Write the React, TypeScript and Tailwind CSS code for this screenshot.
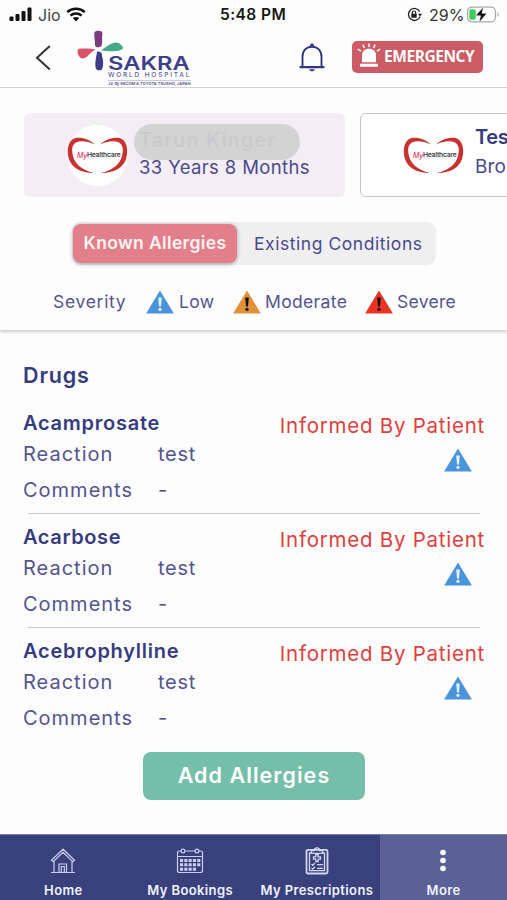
import type { ReactNode } from 'react';

interface Drug {
    id: number;
    name: string;
    reaction: string;
    comments: string;
    nameClass: string;
}

const DRUGS: Drug[] = [
    { id: 1, name: 'Acamprosate', reaction: 'test', comments: '-', nameClass: 'tracking-[0.75px]' },
    { id: 2, name: 'Acarbose', reaction: 'test', comments: '-', nameClass: 'tracking-[0.6px]' },
    { id: 3, name: 'Acebrophylline', reaction: 'test', comments: '-', nameClass: 'tracking-[0.75px]' },
];

const SEVERITY_COLORS = {
    low: { fill: '#4a94dc', mark: '#e4f1fc' },
    moderate: { fill: '#e0913a', mark: '#111111' },
    severe: { fill: '#e93323', mark: '#111111' },
};

function SeverityIcon({ level }: { level: keyof typeof SEVERITY_COLORS }) {
    const { fill, mark } = SEVERITY_COLORS[level];
    return (
        <svg width="28" height="24" viewBox="0 0 28 24" className="shrink-0">
            <path d="M14 .5 27.9 23.5H.1Z" fill={fill} />
            <path d="M12.2 7.500h3.600l-.8 9h-2Z" fill={mark} />
            <circle cx="14" cy="19.300" r="1.600" fill={mark} />
        </svg>
    );
}

function HeartLogo() {
    return (
        <div className="relative h-[61px] w-[61px] shrink-0 rounded-full bg-white">
            <svg width="61" height="61" viewBox="0 0 61 61" className="absolute inset-0">
                <path d="M28 19.500C22 14 12 11 6 14C0 18 0 28 2 34C5 43.500 16 48.500 27 48C16 45.500 9.500 40 7 34C4.500 27 4 20 9 17.500C14 15.500 20 16 28 19.500Z" fill="#c8322e" />
                <path d="M33 19.500C39 14 49 11 55 14C61 18 61 28 59 34C56 43.500 45 48.500 34 48C45 45.500 51.500 40 54 34C56.500 27 57 20 52 17.500C47 15.500 41 16 33 19.500Z" fill="#c8322e" />
            </svg>
            <div className="absolute top-[23px] left-[10px] flex h-[16px] items-center text-[6.800px] leading-none font-semibold tracking-[-0.250px] text-[#444]">
                <span className="text-[7px] font-medium text-[#e0405a] italic">My</span>Healthcare
            </div>
        </div>
    );
}

function StatusBar() {
    return (
        <div className="flex h-[29px] shrink-0 items-center text-[#171717]">
            <svg width="23" height="15" viewBox="0 0 23 15" className="ml-[9px]">
                <rect x="0.500" y="9.500" width="4" height="4.500" rx="1" fill="#111" />
                <rect x="6.500" y="7" width="4" height="7" rx="1" fill="#111" />
                <rect x="12.500" y="4" width="4" height="10" rx="1" fill="#111" />
                <rect x="18.500" y="0.500" width="4" height="13.500" rx="1" fill="#111" />
            </svg>
            <span className="ml-[6px] w-[28px] text-[16px] text-[#444]">Jio</span>
            <svg width="20" height="15" viewBox="0 0 20 15">
                <path d="M1.300 5.200C6.200.7 13.800.7 18.700 5.200M4.400 8.600C7.600 5.800 12.400 5.800 15.600 8.600" fill="none" stroke="#111" strokeWidth="2.500" />
                <path d="M6.800 11.100C8.700 9.600 11.300 9.600 13.200 11.100L10 14.500Z" fill="#111" />
            </svg>
            <span className="ml-[134px] w-[80px] pt-px text-[15.500px] font-semibold tracking-[0.450px] whitespace-nowrap">5:48 PM</span>
            <svg width="15" height="15" viewBox="0 0 15 15" className="ml-[107px]">
                <path d="M12.700 4.500A6 6 0 1 0 13 9.800" fill="none" stroke="#222" strokeWidth="1.300" />
                <path d="M11 6.800h4l-2 3Z" fill="#222" />
                <rect x="4.300" y="6.700" width="5.400" height="4" rx=".6" fill="#222" />
                <path d="M5.300 7V5.700a1.700 1.700 0 0 1 3.400 0V7" fill="none" stroke="#222" strokeWidth="1.200" />
            </svg>
            <span className="ml-[7px] w-[37px] text-[16px] text-[#333]">29%</span>
            <svg width="34" height="18" viewBox="0 0 34 18">
                <rect x="1.500" y="1.200" width="28" height="14.600" rx="4.500" fill="none" stroke="#a9a9a9" strokeWidth="1.200" />
                <path d="M31.500 6v5c1.500-.8 1.500-4.200 0-5Z" fill="#a9a9a9" />
                <rect x="3.300" y="3.200" width="6.500" height="10.600" rx="2.200" fill="#3fcb5a" />
                <path d="M17.500.7 9.500 9.800h5L13 16.700l8-9.500h-5Z" fill="#0c0c0c" stroke="#fdfdfd" strokeWidth=".6" />
            </svg>
        </div>
    );
}

function SakraLogo() {
    return (
        <div className="relative h-[58px] w-[116px] shrink-0">
            <svg width="50" height="44" viewBox="0 0 50 44" className="absolute top-0 left-0">
                <path d="M17.500 2C20 0 25 .3 25.500 3C24.500 7 26 12 24.500 16C22 18 18.500 17.500 18 15.500C18.500 11 16.500 6 17.500 2Z" fill="#7d3c82" />
                <path d="M24 20.500C30 16.500 34 12.500 39 12.500C43 13 46.500 16.500 46 18.500C43 22 32 21.500 24 20.500Z" fill="#46a98a" />
                <path d="M18.500 19.300C13 18.300 5 18.500 1 19C-.5 23 2 28 5.500 28.500C10 28.500 13 22.500 18.500 19.300Z" fill="#d9546a" />
                <path d="M20 21.700C23 21 25.500 23 25 26C26.500 30 26.500 36 25 39.500C22.500 41 19.500 40.500 18.700 38C17.500 33 19.500 26 20 21.700Z" fill="#3c3d86" />
            </svg>
            <span className="absolute top-[25px] left-[31px] origin-left scale-x-[1.280] text-[18.500px] leading-[16px] font-semibold text-[#403f8a]">SAKRA</span>
            <span className="absolute top-[41px] left-[31px] text-[6.500px] leading-[8px] font-medium tracking-[1.820px] whitespace-nowrap text-[#5c5c94]">WORLD HOSPITAL</span>
            <span className="absolute top-[50px] left-[31px] border-t border-[#c9c9dc] text-[4px] leading-[5px] font-semibold tracking-[0.050px] whitespace-nowrap text-[#4b4b8c]">JV by SECOM &amp; TOYOTA TSUSHO, JAPAN</span>
        </div>
    );
}

function Header() {
    return (
        <header className="flex h-[59px] shrink-0 items-start border-b border-[#d2d2d2]">
            <svg width="17" height="26" viewBox="0 0 17 26" className="mt-[16px] ml-[35px]">
                <path d="M14.800 1 2 12.700 14.800 24.500" fill="none" stroke="#333" strokeWidth="2" />
            </svg>
            <div className="ml-[25px] mt-px">
                <SakraLogo />
            </div>
            <svg width="26" height="30" viewBox="0 0 26 30" className="mt-[14px] ml-[106px]">
                <path d="M3.500 24V14C3.500 7.500 7.500 3.700 13 3.700S22.500 7.500 22.500 14v10" fill="none" stroke="#30357e" strokeWidth="1.900" />
                <path d="M1.500 24.200h23" stroke="#30357e" strokeWidth="2.200" strokeLinecap="round" />
                <path d="M10.200 26.300h5.600C15 29 11 29 10.200 26.300Z" fill="#30357e" />
                <circle cx="13" cy="2.500" r="2" fill="#30357e" />
            </svg>
            <button className="mt-[12px] ml-[27px] flex h-[32px] w-[131px] items-center rounded-[5px] bg-[#cb5c65] text-white">
                <svg width="24" height="25" viewBox="0 0 24 25" className="mb-[3px] ml-[5px]">
                    <path d="M5 19.300V12.500C5 8 8 5.800 12 5.800S19 8 19 12.500V19.300Z" fill="#fff" />
                    <rect x="3" y="20.800" width="18" height="3" rx=".5" fill="#fff" />
                    <path d="M12 4V.5M7.400 4.800 5.800 1.600M16.600 4.800 18.200 1.600M4 8.200 .8 6M20 8.200 23.200 6" stroke="#fff" strokeWidth="1.500" />
                </svg>
                <span className="ml-[3px] font-['Open_Sans','Noto_Sans',sans-serif] text-[15.500px] font-bold tracking-[-0.450px]">EMERGENCY</span>
            </button>
        </header>
    );
}

function PatientCards() {
    return (
        <div className="mt-[25px] flex h-[84px] w-full shrink-0 gap-[15px] overflow-hidden pl-[24px]">
            <div className="flex w-[321px] shrink-0 items-center rounded-[6px] bg-[#f4edf3]">
                <div className="ml-[43px]">
                    <HeartLogo />
                </div>
                <div className="mb-[12px] ml-[6px] flex flex-col">
                    <div className="mt-[2px] flex h-[36px] w-[166px] items-center rounded-full bg-[#d3d3d4] pb-[3px] pl-[5px] text-[20px] font-medium tracking-[1.200px] whitespace-nowrap text-[#cacacc]">
                        Tarun Kinger
                    </div>
                    <span className="-mt-[3px] ml-[5px] h-[20px] text-[18.500px] leading-[20px] tracking-[0.370px] whitespace-nowrap text-[#4a4a8f]">33 Years 8 Months</span>
                </div>
            </div>
            <div className="flex w-[321px] shrink-0 items-center rounded-[6px] border border-[#c4c4c6] bg-white">
                <div className="ml-[42px]">
                    <HeartLogo />
                </div>
                <div className="mb-[5px] ml-[11px] flex flex-col text-[#353a7f]">
                    <span className="text-[20px] leading-[29px] font-semibold tracking-[-0.300px]">Tes</span>
                    <span className="text-[19px] leading-[30px] tracking-[0.100px] text-[#4a4a8f]">Bro</span>
                </div>
            </div>
        </div>
    );
}

function Tabs() {
    return (
        <div className="mt-[25px] ml-[72px] flex h-[43px] w-[364px] shrink-0 items-center rounded-[9px] bg-[#efefef] p-px">
            <button className="h-[39px] w-[164px] rounded-[8px] bg-[#e37f8b] text-[17.500px] font-semibold tracking-[0.370px] whitespace-nowrap text-[#fdf3f3] shadow-[0_1px_4px_rgba(0,0,0,0.35)]">
                Known Allergies
            </button>
            <button className="ml-[17px] pt-px text-[17.500px] tracking-[0.550px] whitespace-nowrap text-[#4a4a8f]">Existing Conditions</button>
        </div>
    );
}

function SeverityLegend() {
    return (
        <div className="flex h-[65px] shrink-0 items-center pt-[8px] text-[17.500px] whitespace-nowrap text-[#54548f] shadow-[0_2px_3px_rgba(0,0,0,0.2)]">
            <span className="ml-[53px] w-[93px] pt-px tracking-[0.700px]">Severity</span>
            <SeverityIcon level="low" />
            <span className="ml-[5px] w-[54px] pt-[2px] tracking-[0.400px]">Low</span>
            <SeverityIcon level="moderate" />
            <span className="ml-[4px] w-[100px] pt-[2px] tracking-[0.350px]">Moderate</span>
            <SeverityIcon level="severe" />
            <span className="ml-[4px] pt-[2px] tracking-[0.300px]">Severe</span>
        </div>
    );
}

function DrugRow({ drug, last }: { drug: Drug; last: boolean }) {
    return (
        <div className="h-[114px] pr-[22px] pl-[23px]">
            <div className="flex h-[113px] justify-between">
                <div className="text-[20px] whitespace-nowrap text-[#54548f]">
                    <div className={`h-[36px] pt-[5px] leading-[36px] font-semibold text-[#363b80] ${drug.nameClass}`}>{drug.name}</div>
                    <div className="flex h-[36px] items-center">
                        <span className="w-[135px] tracking-[1px]">Reaction</span>
                        <span className="tracking-[0.700px]">{drug.reaction}</span>
                    </div>
                    <div className="flex h-[35px] items-center">
                        <span className="w-[135px] tracking-[1px]">Comments</span>
                        <span>{drug.comments}</span>
                    </div>
                </div>
                <div className="flex flex-col items-end pt-[10px]">
                    <span className="h-[30px] text-[20.500px] leading-[31px] tracking-[0.750px] whitespace-nowrap text-[#dd403d]">Informed By Patient</span>
                    <div className="mt-[8px] mr-[13px]">
                        <SeverityIcon level="low" />
                    </div>
                </div>
            </div>
            {!last && <div className="mr-[5px] ml-[5px] h-px bg-[#c9c9cb]" />}
        </div>
    );
}

function HomeIcon() {
    return (
        <svg width="26" height="26" viewBox="0 0 26 26" fill="none" stroke="#c9cdf0" strokeWidth="1.200">
            <path d="M1.500 12.300 13 1.200 24.500 12.300 22.800 13.700 13 4.300 3.200 13.700ZM4 13.500V24.500M22 13.500V24.500M1 24.500h24M9 24.500V16h7.500v8.500M11.300 24.500V18.500h3v6" />
        </svg>
    );
}

function CalendarIcon() {
    return (
        <svg width="28" height="26" viewBox="0 0 28 26" fill="none" stroke="#c9cdf0" strokeWidth="1.200">
            <path d="M5 3H3.500Q1.500 3 1.500 5V22.500Q1.500 24.500 3.500 24.500H24.500Q26.500 24.500 26.500 22.500V5Q26.500 3 24.500 3H23M9 3H19M1.500 8.500H26.500" />
            <circle cx="7" cy="3" r="1.900" />
            <circle cx="21" cy="3" r="1.900" />
            <path d="M4 12.500H24.500M4 16.800H24.500M4 21.200H20" strokeWidth="3.100" strokeDasharray="3.100 1.200" />
        </svg>
    );
}

function ClipboardIcon() {
    return (
        <svg width="24" height="29" viewBox="0 0 24 29" fill="none" stroke="#d3d6f2" strokeWidth="1.300">
            <rect x="1.500" y="3.800" width="21" height="23.700" rx="1.500" strokeWidth="1.800" />
            <path d="M6.500 7H4.500V24.700H19.500V7H17.500M6.500 7.300V4.500H9.300C9.500 1 14.500 1 14.700 4.500H17.500V7.300Z" />
            <path d="M10.800 8.500h2.400v2.300h2.300v2.400h-2.300v2.300h-2.400v-2.300H8.500v-2.400h2.300Z" />
            <path d="M6.500 18.200 7.800 19.300 10 17M6.500 22 7.800 23.100 10 20.800M12 18.700H18M12 22.300H18" />
        </svg>
    );
}

function MoreIcon() {
    return (
        <svg width="8" height="24" viewBox="0 0 8 24" fill="#fff" className="mr-[2px]">
            <circle cx="4" cy="3.500" r="2.800" />
            <circle cx="4" cy="11.500" r="2.800" />
            <circle cx="4" cy="19.500" r="2.800" />
        </svg>
    );
}

function NavItem({ icon, label, active = false }: { icon: ReactNode; label: string; active?: boolean }) {
    return (
        <button className={`flex flex-1 flex-col items-center whitespace-nowrap text-[#f1f2ff] ${active ? 'bg-[#5a6197]' : ''}`}>
            <span className="flex h-[30px] items-center">{icon}</span>
            <span className="mt-[5px] text-[13px] leading-[20px] font-semibold tracking-[0.400px]">{label}</span>
        </button>
    );
}

export default function App() {
    return (
        <div className="flex h-[900px] w-[507px] flex-col overflow-hidden bg-[#fdfdfd] font-[Inter,sans-serif]">
            <StatusBar />
            <Header />
            <PatientCards />
            <Tabs />
            <SeverityLegend />

            <main className="flex-1">
                <h2 className="mt-[31px] ml-[23px] text-[21.500px] leading-[28px] font-semibold tracking-[0.850px] text-[#363b80]">Drugs</h2>
                <div className="mt-[11px]">
                    {DRUGS.map((drug, i) => (
                        <DrugRow key={drug.id} drug={drug} last={i === DRUGS.length - 1} />
                    ))}
                </div>
                <button className="mt-[10px] ml-[143px] h-[48px] w-[222px] rounded-[8px] bg-[#75bea9] pb-[2px] text-[21.500px] font-semibold tracking-[1.050px] text-white">
                    Add Allergies
                </button>
            </main>

            <nav className="flex h-[66px] shrink-0 border-t border-[#7c80a8] bg-[#39417c] *:pt-[11px]">
                <NavItem icon={<HomeIcon />} label="Home" />
                <NavItem icon={<CalendarIcon />} label="My Bookings" />
                <NavItem icon={<ClipboardIcon />} label="My Prescriptions" />
                <NavItem icon={<MoreIcon />} label="More" active />
            </nav>
        </div>
    );
}
